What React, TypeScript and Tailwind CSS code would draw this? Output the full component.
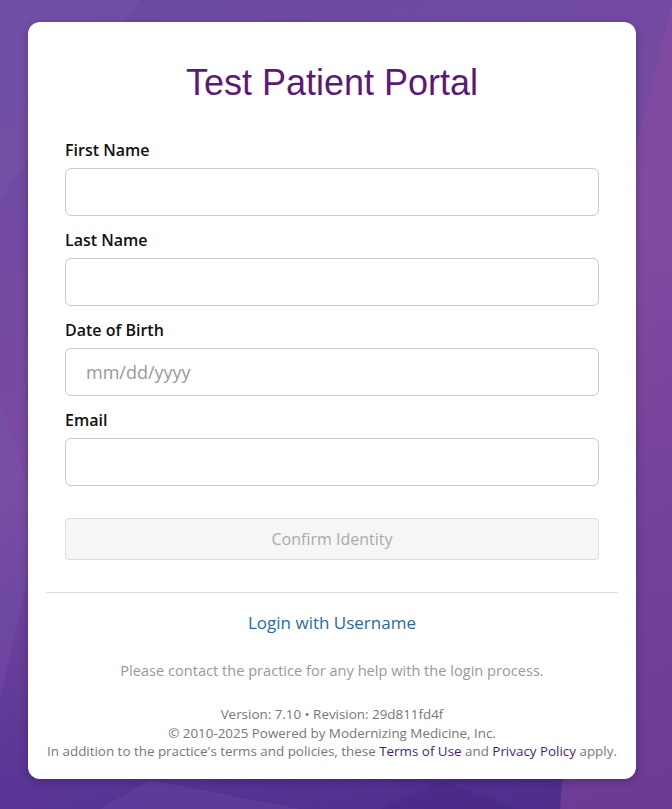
import React from "react";

function Field({ label, placeholder }: { label: string; placeholder?: string }) {
  return (
    <div className="flex flex-col">
      <label className="text-[16px] leading-[22px] font-semibold text-[#111] mb-[7px]">{label}</label>
      <input
        className="h-[48px] w-full rounded-[6px] border border-[#cccccc] px-[20px] text-[18px] text-[#333] placeholder:text-[#999] outline-none"
        placeholder={placeholder}
      />
    </div>
  );
}

export default function App() {
  return (
    <div
      className="relative min-h-[809px] w-full overflow-hidden bg-[linear-gradient(160deg,#6a4aa3_0%,#7a4aa2_45%,#5a3595_75%,#4c2c8a_100%)] pt-[22px] pb-[30px]"
      style={{ fontFamily: '"Open Sans", "Noto Sans", sans-serif' }}
    >
      <svg className="absolute inset-0 h-full w-full" viewBox="0 0 672 809" preserveAspectRatio="none">
        <polygon points="672,0 672,809 560,809 600,300" fill="#8c4aa0" opacity="0.5" />
        <polygon points="0,0 140,0 0,200" fill="#7a58ac" opacity="0.35" />
        <polygon points="0,400 40,520 0,700" fill="#7858b0" opacity="0.3" />
        <polygon points="150,780 300,809 100,809" fill="#6a48a5" opacity="0.4" />
        <polygon points="380,809 440,780 520,809" fill="#3f2580" opacity="0.35" />
      </svg>
      <div className="relative ml-[28px] w-[608px] rounded-[12px] bg-white shadow-[0_2px_8px_rgba(0,0,0,0.25)] pt-[33px] pb-[18px]">
        <h1
          className="text-center text-[36px] leading-[56px] text-[#5b1a7a]"
          style={{ fontFamily: '"Liberation Sans", Arial, sans-serif' }}
        >
          Test Patient Portal
        </h1>
        <div className="mt-[28px] px-[37px] flex flex-col gap-[13px]">
          <Field label="First Name" />
          <Field label="Last Name" />
          <Field label="Date of Birth" placeholder="mm/dd/yyyy" />
          <Field label="Email" />
          <button
            className="mt-[19px] h-[42px] w-full rounded-[4px] border border-[#dddddd] bg-[#f6f6f6] text-[16px] text-[#aaaaaa]"
            disabled
          >
            Confirm Identity
          </button>
        </div>
        <div className="mx-[18px] mt-[32px] border-t border-[#dddddd]" />
        <div className="mt-[18px] text-center text-[17px] leading-[24px] text-[#2b6aa0]">Login with Username</div>
        <div className="mt-[25px] text-center text-[14.6px] leading-[20px] text-[#999999]">
          Please contact the practice for any help with the login process.
        </div>
        <div className="mt-[25px] text-center text-[13.4px] leading-[18.5px] text-[#777777]">
          <div>Version: 7.10 • Revision: 29d811fd4f</div>
          <div>© 2010-2025 Powered by Modernizing Medicine, Inc.</div>
          <div>
            In addition to the practice's terms and policies, these{" "}
            <span className="text-[#4a1e78]">Terms of Use</span> and{" "}
            <span className="text-[#4a1e78]">Privacy Policy</span> apply.
          </div>
        </div>
      </div>
    </div>
  );
}
